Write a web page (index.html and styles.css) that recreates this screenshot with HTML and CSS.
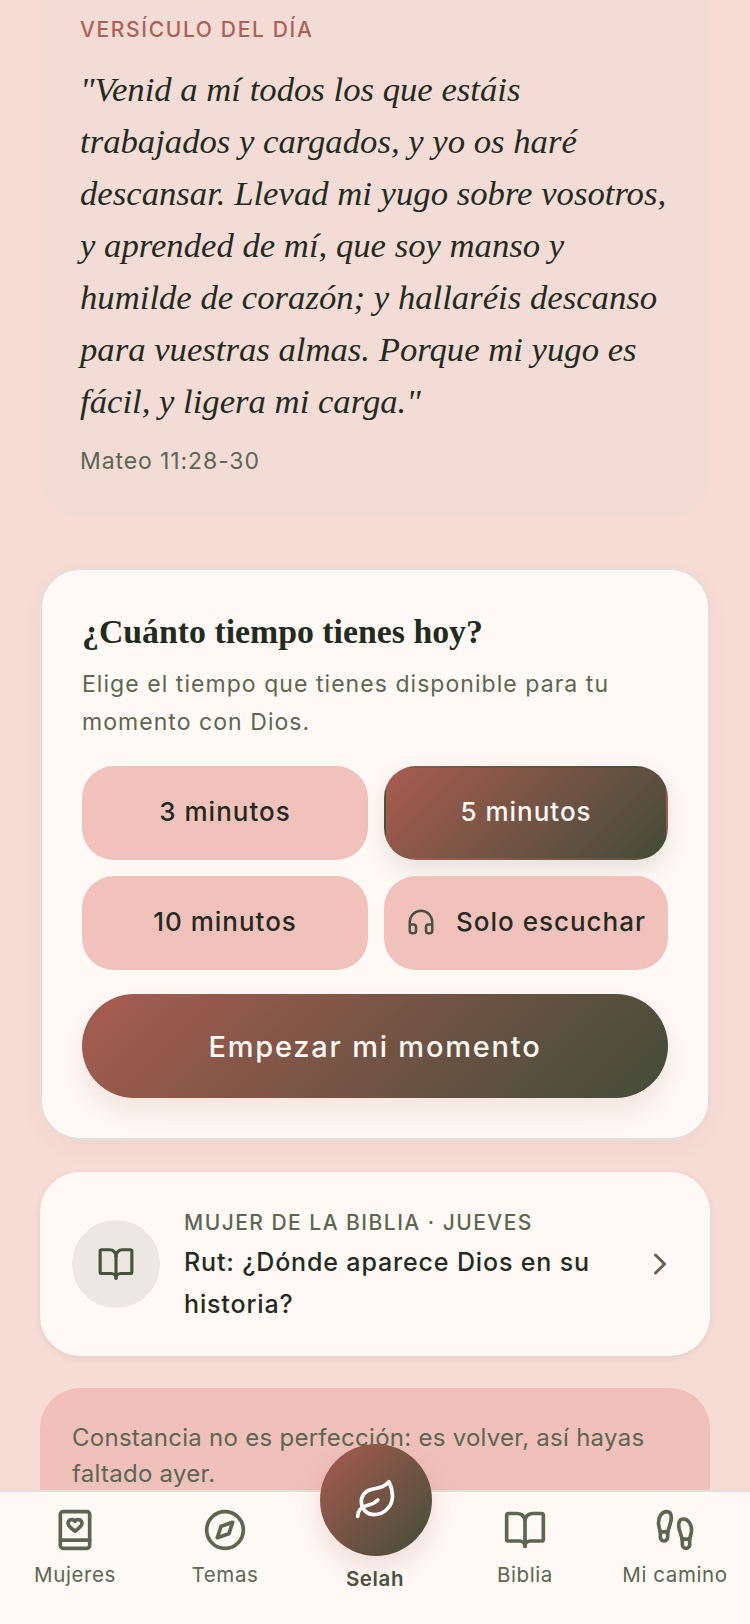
FILE: index.html
```html
<!DOCTYPE html>
<html lang="es">
<head>
  <meta charset="UTF-8" />
  <meta name="viewport" content="width=device-width, initial-scale=1.0"/>
  <title>Selah</title>
  <link rel="stylesheet" href="styles.css">
</head>
<body>
  <div class="app">
    <main class="content">

      <section class="verse-card">
        <p class="verse-label">VERSÍCULO DEL DÍA</p>
        <p class="verse-text">"Venid a mí todos los que estáis<br>trabajados y cargados, y yo os haré<br>descansar. Llevad mi yugo sobre vosotros,<br>y aprended de mí, que soy manso y<br>humilde de corazón; y hallaréis descanso<br>para vuestras almas. Porque mi yugo es<br>fácil, y ligera mi carga."</p>
        <p class="verse-ref">Mateo 11:28-30</p>
      </section>

      <section class="time-card">
        <h2>¿Cuánto tiempo tienes hoy?</h2>
        <p class="time-sub">Elige el tiempo que tienes disponible para tu momento con Dios.</p>
        <div class="time-grid">
          <button class="time-btn">3 minutos</button>
          <button class="time-btn active">5 minutos</button>
          <button class="time-btn">10 minutos</button>
          <button class="time-btn">
            <svg class="listen-icon" viewBox="0 0 24 24" fill="none" stroke="#48523e" stroke-width="2" stroke-linecap="round" stroke-linejoin="round">
              <path d="M3 14h3a2 2 0 0 1 2 2v3a2 2 0 0 1-2 2H5a2 2 0 0 1-2-2v-7a9 9 0 0 1 18 0v7a2 2 0 0 1-2 2h-1a2 2 0 0 1-2-2v-3a2 2 0 0 1 2-2h3"/>
            </svg>
            Solo escuchar
          </button>
        </div>
        <button class="start-btn">Empezar mi momento</button>
      </section>

      <section class="woman-card">
        <div class="woman-icon">
          <svg viewBox="0 0 24 24" fill="none" stroke="#48523e" stroke-width="2" stroke-linecap="round" stroke-linejoin="round">
            <path d="M12 7v14"/>
            <path d="M3 18a1 1 0 0 1-1-1V4a1 1 0 0 1 1-1h5a4 4 0 0 1 4 4 4 4 0 0 1 4-4h5a1 1 0 0 1 1 1v13a1 1 0 0 1-1 1h-6a3 3 0 0 0-3 3 3 3 0 0 0-3-3z"/>
          </svg>
        </div>
        <div class="woman-text">
          <p class="woman-label">MUJER DE LA BIBLIA · JUEVES</p>
          <p class="woman-title">Rut: ¿Dónde aparece Dios en su historia?</p>
        </div>
        <svg class="chevron" viewBox="0 0 24 24" fill="none" stroke="#5c6652" stroke-width="2" stroke-linecap="round" stroke-linejoin="round">
          <path d="m9 18 6-6-6-6"/>
        </svg>
      </section>

      <section class="quote-card">
        <p>Constancia no es perfección: es volver, así hayas faltado ayer.</p>
      </section>

    </main>

    <nav class="bottom-nav">
      <a class="nav-item">
        <svg viewBox="0 0 24 24" fill="none" stroke="#5c6652" stroke-width="2" stroke-linecap="round" stroke-linejoin="round">
          <rect x="4" y="2" width="16" height="20" rx="1.5"/>
          <path d="M4 17.5h16"/>
          <path d="M8.2 8.4a2.1 2.1 0 0 1 3.8-1.2 2.1 2.1 0 0 1 3.8 1.2c0 1.5-2.2 3-3.8 4.3-1.6-1.3-3.8-2.8-3.8-4.3z"/>
        </svg>
        <span>Mujeres</span>
      </a>
      <a class="nav-item">
        <svg viewBox="0 0 24 24" fill="none" stroke="#5c6652" stroke-width="2" stroke-linecap="round" stroke-linejoin="round">
          <circle cx="12" cy="12" r="10"/>
          <path d="m16.2 7.8-2.1 6.3-6.3 2.1 2.1-6.3z"/>
        </svg>
        <span>Temas</span>
      </a>
      <a class="nav-item nav-center">
        <div class="selah-btn">
          <svg viewBox="0 0 24 24" fill="none" stroke="#fff" stroke-width="2" stroke-linecap="round" stroke-linejoin="round">
            <path d="M11 20A7 7 0 0 1 9.8 6.1C15.5 5 17 4.48 19 2c1 2 2 4.18 2 8 0 5.5-4.78 10-10 10Z"/>
            <path d="M2 21c0-3 1.85-5.36 5.08-6C9.5 14.52 12 13 13 12"/>
          </svg>
        </div>
        <span>Selah</span>
      </a>
      <a class="nav-item">
        <svg viewBox="0 0 24 24" fill="none" stroke="#5c6652" stroke-width="2" stroke-linecap="round" stroke-linejoin="round">
          <path d="M12 7v14"/>
          <path d="M3 18a1 1 0 0 1-1-1V4a1 1 0 0 1 1-1h5a4 4 0 0 1 4 4 4 4 0 0 1 4-4h5a1 1 0 0 1 1 1v13a1 1 0 0 1-1 1h-6a3 3 0 0 0-3 3 3 3 0 0 0-3-3z"/>
        </svg>
        <span>Biblia</span>
      </a>
      <a class="nav-item">
        <svg viewBox="0 0 24 24" fill="none" stroke="#5c6652" stroke-width="2" stroke-linecap="round" stroke-linejoin="round">
          <path d="M4 16v-2.38C4 11.5 2.97 10.5 3 8c.03-2.72 1.49-6 4.5-6C9.37 2 10 3.8 10 5.5c0 3.11-2 5.66-2 8.68V16a2 2 0 1 1-4 0Z"/>
          <path d="M20 20v-2.38c0-2.12 1.03-3.12 1-5.62-.03-2.72-1.49-6-4.5-6C14.63 6 14 7.8 14 9.5c0 3.11 2 5.66 2 8.68V20a2 2 0 1 0 4 0Z"/>
          <path d="M16 17h4"/>
          <path d="M4 13h4"/>
        </svg>
        <span>Mi camino</span>
      </a>
    </nav>
  </div>
</body>
</html>
```

FILE: styles.css
```css
* {
  box-sizing: border-box;
  margin: 0;
  padding: 0;
}

html, body {
  height: 100%;
  width: 100%;
  overflow: hidden;
}

body {
  background: #f7dbd5;
  color: #232b20;
  font-family: Inter, "Noto Sans", sans-serif;
}

.app {
  height: 1624px;
  overflow: hidden;
  position: relative;
}

.content {
  display: flex;
  flex-direction: column;
  margin-top: -40px;
  padding: 0 40px;
}

/* versiculo */
.verse-card {
  background: #f3dcd6;
  border-radius: 40px;
  height: 558px;
  padding: 54px 40px 0;
}

.verse-label {
  color: #b05f55;
  font-size: 21px;
  font-weight: 500;
  letter-spacing: 1.65px;
  line-height: 32px;
}

.verse-text {
  font-family: "Liberation Serif", serif;
  font-style: italic;
  font-size: 34.7px;
  line-height: 52px;
  margin-top: 18px;
  white-space: nowrap;
}

.verse-ref {
  color: #5c6652;
  font-size: 23px;
  letter-spacing: 0.9px;
  line-height: 36px;
  margin-top: 15px;
}

/* tiempo */
.time-card {
  background: #fff9f5;
  border: 2px solid #e3dfda;
  border-radius: 40px;
  margin-top: 50px;
  height: 572px;
  padding: 40px 40px 0;
  box-shadow: 0 8px 24px rgba(72, 82, 62, 0.04);
}

.time-card h2 {
  font-family: "Liberation Serif", serif;
  font-size: 33.8px;
  font-weight: 700;
  line-height: 44px;
}

.time-sub {
  color: #5c6652;
  font-size: 23px;
  letter-spacing: 1.05px;
  line-height: 38px;
  margin-top: 11px;
}

.time-grid {
  display: grid;
  grid-template-columns: 286px 284px;
  grid-auto-rows: 94px;
  gap: 16px;
  margin-top: 25px;
}

.time-btn {
  background: #f1c2bc;
  border: 2px solid transparent;
  border-radius: 32px;
  color: #232b20;
  font-family: inherit;
  font-size: 26px;
  font-weight: 500;
  letter-spacing: 1px;
  line-height: 30px;
  padding-bottom: 2px;
  display: flex;
  align-items: center;
  justify-content: center;
  gap: 20px;
}

.time-btn.active {
  background: linear-gradient(135deg, #a85c50, #424c38);
  color: #fff9f5;
  box-shadow: 0 10px 24px rgba(72, 82, 62, 0.14);
}

.listen-icon {
  width: 30px;
  height: 30px;
  flex-shrink: 0;
}

.start-btn {
  display: block;
  width: 586px;
  height: 104px;
  margin-top: 24px;
  background: linear-gradient(135deg, #a85c50, #424c38);
  border: none;
  border-radius: 52px;
  color: #fff9f5;
  font-family: inherit;
  font-size: 29px;
  font-weight: 500;
  letter-spacing: 1.8px;
  box-shadow: 0 14px 30px rgba(168, 92, 80, 0.14);
}

/* mujer */
.woman-card {
  background: #fff9f5;
  border-radius: 40px;
  height: 184px;
  margin-top: 32px;
  padding: 0 32px 0 32px;
  display: flex;
  align-items: center;
  gap: 24px;
  box-shadow: 0 2px 6px rgba(72, 82, 62, 0.1);
}

.woman-icon {
  width: 88px;
  height: 88px;
  flex-shrink: 0;
  background: #ebe8e3;
  border-radius: 50%;
  display: flex;
  align-items: center;
  justify-content: center;
}

.woman-icon svg {
  width: 38px;
  height: 38px;
}

.woman-text {
  flex: 1;
  padding-top: 3px;
}

.woman-label {
  color: #5c6652;
  font-size: 21px;
  font-weight: 500;
  letter-spacing: 1.47px;
  line-height: 32px;
}

.woman-title {
  font-size: 25px;
  font-weight: 500;
  letter-spacing: 0.85px;
  line-height: 42px;
  margin-top: 2px;
}

.chevron {
  width: 36px;
  height: 36px;
  flex-shrink: 0;
}

/* frase */
.quote-card {
  background: #f0c1bb;
  border-radius: 40px;
  margin-top: 32px;
  height: 180px;
  padding: 32px;
  color: #5c6652;
  font-size: 24px;
  letter-spacing: 0.27px;
  line-height: 36px;
}

/* barra de abajo */
.bottom-nav {
  position: absolute;
  left: 0;
  right: 0;
  bottom: 0;
  height: 134px;
  background: #fff9f5;
  border-top: 2px solid #e3dfda;
  display: grid;
  grid-template-columns: repeat(5, 150px);
}

.nav-item {
  display: flex;
  flex-direction: column;
  align-items: center;
  padding-top: 16px;
  color: #5c6652;
  font-size: 20.5px;
  letter-spacing: 0.6px;
}

.nav-item svg {
  width: 44px;
  height: 44px;
}

.nav-item span {
  margin-top: 8px;
  line-height: 30px;
}

.nav-center {
  position: relative;
}

.nav-center span {
  margin-top: 56px;
  font-weight: 600;
  color: #48523e;
}

.selah-btn {
  position: absolute;
  top: -48px;
  left: 20px;
  width: 112px;
  height: 112px;
  border-radius: 50%;
  background: linear-gradient(135deg, #a85c50, #424c38);
  box-shadow: 0 10px 30px rgba(168, 92, 80, 0.2);
  display: flex;
  align-items: center;
  justify-content: center;
}

.selah-btn svg {
  width: 44px;
  height: 44px;
}
```
